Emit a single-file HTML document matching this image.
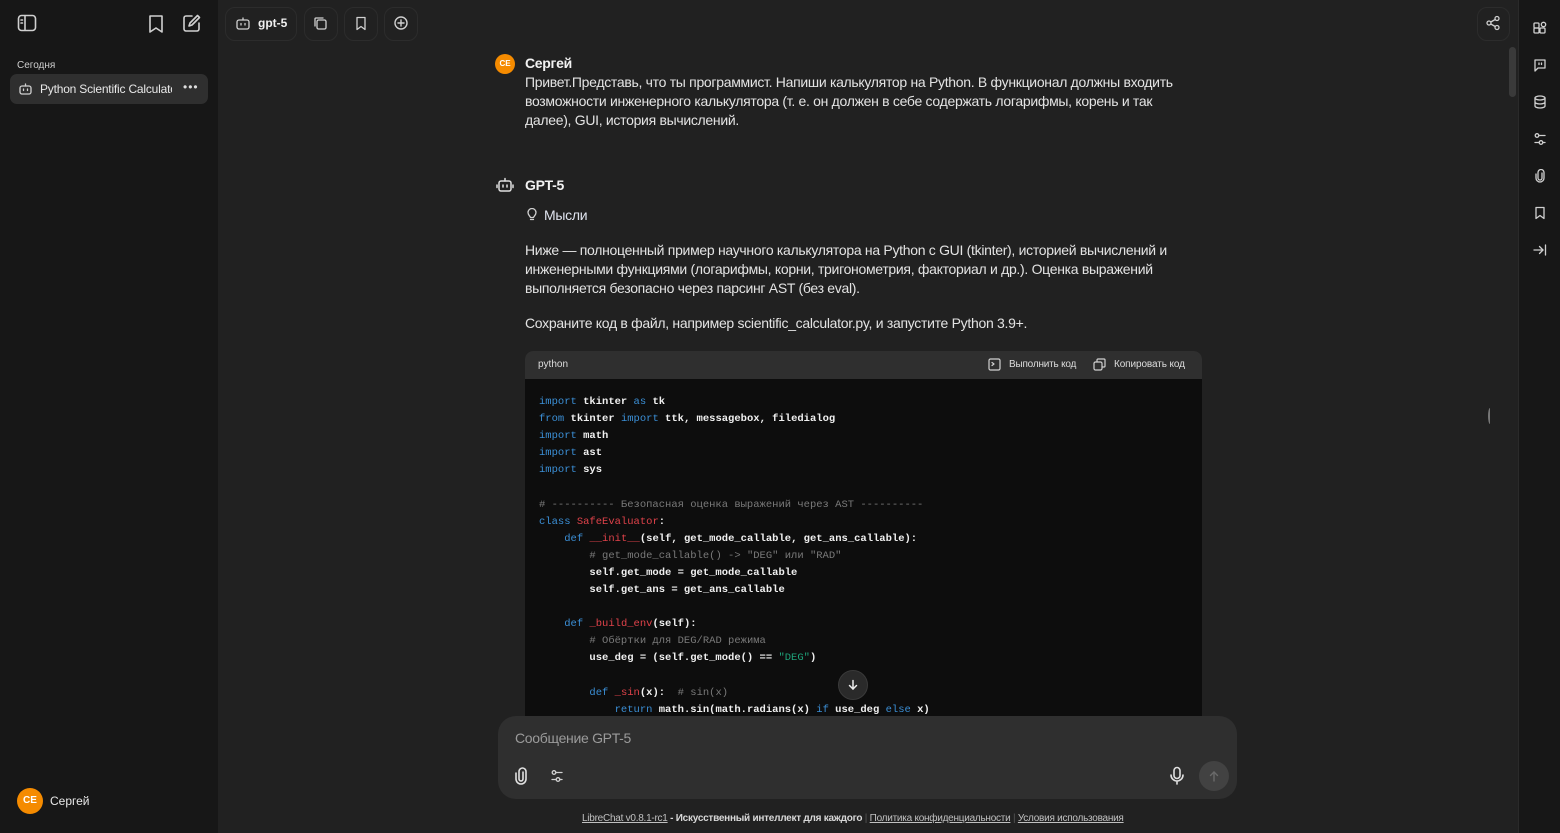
<!DOCTYPE html>
<html><head><meta charset="utf-8"><style>
*{box-sizing:border-box;margin:0;padding:0}
body{width:1560px;height:833px;overflow:hidden;background:#212121;font-family:"Liberation Sans","Noto Sans CJK SC",sans-serif;color:#ececec;position:relative}
.abs{position:absolute}
.side{left:0;top:0;width:218px;height:833px;background:#171717}
.rp{left:1518px;top:0;width:42px;height:833px;background:#171717;border-left:1px solid #2a2a2a}
.btn{position:absolute;border:1px solid #2c2c2c;border-radius:10px;height:34px;top:7px}
.t{position:absolute;font-size:14px;line-height:19px;color:#e3e3e3;white-space:nowrap;letter-spacing:-0.3px}
.code{position:absolute;left:539px;top:394px;font-family:"Liberation Mono",monospace;font-size:10.5px;line-height:17.1px;color:#f0f0f0;font-weight:bold;white-space:pre}
.k{color:#3b8fd6;font-weight:normal}.c{color:#7a7a7a;font-weight:normal}.r{color:#e0424a;font-weight:normal}.g{color:#1fa37a;font-weight:normal}
svg{position:absolute;fill:none;stroke:#d0d0d0;stroke-width:1.6;stroke-linecap:round;stroke-linejoin:round}
.f{position:absolute;top:813px;font-size:10px;color:#d8d8d8;white-space:nowrap;letter-spacing:-0.25px;font-weight:bold}
.f u{color:#c0c0c0;font-weight:normal}
</style></head><body>
<div class="abs side"></div>
<svg style="left:17px;top:14px" width="20" height="18" viewBox="0 0 20 18"><rect x="1.5" y="1.5" width="17" height="15" rx="3"/><line x1="8" y1="2" x2="8" y2="16"/><line x1="4" y1="6" x2="5.5" y2="6"/><line x1="4" y1="9" x2="5.5" y2="9"/></svg>
<svg style="left:147px;top:14px" width="18" height="20" viewBox="0 0 18 20"><path d="M3 2h12v16l-6-4-6 4z"/></svg>
<svg style="left:182px;top:13px" width="20" height="20" viewBox="0 0 20 20"><path d="M10 3H4a2 2 0 0 0-2 2v11a2 2 0 0 0 2 2h11a2 2 0 0 0 2-2v-6"/><path d="M15.5 2.5l2 2L10 12l-3 1 1-3z"/></svg>
<div class="abs" style="left:17px;top:60px;font-size:10px;color:#cfcfcf">Сегодня</div>
<div class="abs" style="left:10px;top:74px;width:198px;height:30px;background:#2f2f2f;border-radius:7px"></div>
<svg style="left:19px;top:83px;stroke-width:1.3" width="13" height="12" viewBox="0 0 13 12"><rect x="1" y="3" width="11" height="8" rx="2"/><line x1="6.5" y1="1" x2="6.5" y2="3"/><line x1="4.5" y1="6" x2="4.5" y2="7.5"/><line x1="8.5" y1="6" x2="8.5" y2="7.5"/></svg>
<div class="abs" style="left:40px;top:82px;width:132px;overflow:hidden;white-space:nowrap;font-size:12px;color:#e8e8e8;letter-spacing:-0.2px">Python Scientific Calculator</div>
<div class="abs" style="left:183px;top:80px;font-size:12px;color:#ddd;letter-spacing:1px">•••</div>
<div class="abs" style="left:17px;top:788px;width:26px;height:26px;border-radius:50%;background:#f58b00;color:#fff;font-size:10px;font-weight:bold;text-align:center;line-height:26px">CE</div>
<div class="abs" style="left:50px;top:794px;font-size:12px;color:#e8e8e8">Сергей</div>
<div class="btn" style="left:225px;width:72px"></div>
<svg style="left:236px;top:17px;stroke-width:1.3" width="14" height="13" viewBox="0 0 14 13"><rect x="1" y="3" width="12" height="9" rx="2"/><line x1="7" y1="1" x2="7" y2="3"/><line x1="5" y1="6.5" x2="5" y2="8"/><line x1="9" y1="6.5" x2="9" y2="8"/></svg>
<div class="abs" style="left:258px;top:16px;font-size:12px;font-weight:bold;color:#f0f0f0">gpt-5</div>
<div class="btn" style="left:304px;width:34px"></div>
<svg style="left:313px;top:16px;stroke-width:1.3" width="15" height="15" viewBox="0 0 15 15"><rect x="4" y="4" width="9" height="9" rx="1.5"/><path d="M10 2H3a1 1 0 0 0-1 1v7"/></svg>
<div class="btn" style="left:344px;width:34px"></div>
<svg style="left:355px;top:16px;stroke-width:1.3" width="12" height="15" viewBox="0 0 12 15"><path d="M2 1.5h8v12l-4-3-4 3z"/></svg>
<div class="btn" style="left:384px;width:34px"></div>
<svg style="left:393px;top:15px;stroke-width:1.4" width="16" height="16" viewBox="0 0 16 16"><circle cx="8" cy="8" r="6"/><line x1="8" y1="5" x2="8" y2="11"/><line x1="5" y1="8" x2="11" y2="8"/></svg>
<div class="btn" style="left:1477px;width:33px"></div>
<svg style="left:1485px;top:15px;stroke-width:1.3" width="16" height="16" viewBox="0 0 16 16"><circle cx="12" cy="3.5" r="2"/><circle cx="4" cy="8" r="2"/><circle cx="12" cy="12.5" r="2"/><line x1="5.8" y1="7" x2="10.2" y2="4.5"/><line x1="5.8" y1="9" x2="10.2" y2="11.5"/></svg>
<div class="abs" style="left:1509px;top:47px;width:7px;height:50px;border-radius:4px;background:#3a3a3a"></div>
<div class="abs rp"></div>
<svg style="left:1533px;top:21px;stroke-width:1.3" width="14" height="14" viewBox="0 0 14 14"><rect x="1" y="7" width="5" height="5" rx="1"/><rect x="7" y="7" width="5" height="5" rx="1"/><rect x="1" y="2" width="5" height="5" rx="1"/><circle cx="10.5" cy="3.5" r="2.2"/></svg>
<svg style="left:1533px;top:58px;stroke-width:1.3" width="14" height="14" viewBox="0 0 14 14"><path d="M2 2h10v8H5l-3 3z"/><line x1="6" y1="5" x2="6" y2="6.5"/><line x1="8.5" y1="5" x2="8.5" y2="6.5"/></svg>
<svg style="left:1533px;top:95px;stroke-width:1.3" width="14" height="14" viewBox="0 0 14 14"><ellipse cx="7" cy="3" rx="5" ry="2"/><path d="M2 3v8c0 1 2 2 5 2s5-1 5-2V3M2 7c0 1 2 2 5 2s5-1 5-2"/></svg>
<svg style="left:1533px;top:132px;stroke-width:1.3" width="14" height="14" viewBox="0 0 14 14"><circle cx="4" cy="3.5" r="1.8"/><circle cx="8" cy="10.5" r="1.8"/><line x1="6" y1="3.5" x2="12" y2="3.5"/><line x1="2" y1="10.5" x2="6" y2="10.5"/><line x1="10" y1="10.5" x2="12" y2="10.5"/></svg>
<svg style="left:1533px;top:169px;stroke-width:1.3" width="14" height="14" viewBox="0 0 14 14"><path d="M9 4v5a2 2 0 0 1-4 0V3.5a3 3 0 0 1 6 0V9a4 4 0 0 1-8 0V5"/></svg>
<svg style="left:1533px;top:206px;stroke-width:1.3" width="14" height="14" viewBox="0 0 14 14"><path d="M3 1.5h8v11l-4-3-4 3z"/></svg>
<svg style="left:1533px;top:243px;stroke-width:1.3" width="14" height="14" viewBox="0 0 14 14"><line x1="1" y1="7" x2="10" y2="7"/><path d="M6.5 3.5L10 7l-3.5 3.5"/><line x1="12.5" y1="2" x2="12.5" y2="12"/></svg>
<div class="abs" style="left:1488px;top:408px;width:4px;height:16px;border-left:2px solid #777;border-radius:50% 0 0 50%"></div>
<div class="abs" style="left:495px;top:54px;width:20px;height:20px;border-radius:50%;background:#f58b00;color:#fff;font-size:8px;font-weight:bold;text-align:center;line-height:20px">CE</div>
<div class="t" style="left:525px;top:54px;font-weight:bold;color:#f2f2f2">Сергей</div>
<div class="t" style="left:525px;top:73px">Привет.Представь, что ты программист. Напиши калькулятор на Python. В функционал должны входить</div>
<div class="t" style="left:525px;top:92px">возможности инженерного калькулятора (т. е. он должен в себе содержать логарифмы, корень и так</div>
<div class="t" style="left:525px;top:111px">далее), GUI, история вычислений.</div>
<svg style="left:496px;top:177px;stroke:#e0e0e0;stroke-width:1.5" width="18" height="16" viewBox="0 0 18 16"><rect x="3" y="4" width="12" height="10" rx="2"/><line x1="9" y1="1.5" x2="9" y2="4"/><line x1="1" y1="8" x2="1" y2="10.5"/><line x1="17" y1="8" x2="17" y2="10.5"/><line x1="7" y1="8" x2="7" y2="10"/><line x1="11" y1="8" x2="11" y2="10"/></svg>
<div class="t" style="left:525px;top:176px;font-weight:bold;color:#f2f2f2">GPT-5</div>
<svg style="left:527px;top:208px;stroke-width:1.3" width="10" height="14" viewBox="0 0 10 14"><path d="M3.5 9.5C3 8 1 7 1 4.5a4 4 0 0 1 8 0C9 7 7 8 6.5 9.5zM3.5 11.5h3"/></svg>
<div class="t" style="left:544px;top:206px;color:#dfe3ee">Мысли</div>
<div class="t" style="left:525px;top:241px">Ниже — полноценный пример научного калькулятора на Python с GUI (tkinter), историей вычислений и</div>
<div class="t" style="left:525px;top:260px">инженерными функциями (логарифмы, корни, тригонометрия, факториал и др.). Оценка выражений</div>
<div class="t" style="left:525px;top:279px">выполняется безопасно через парсинг AST (без eval).</div>
<div class="t" style="left:525px;top:314px">Сохраните код в файл, например scientific_calculator.py, и запустите Python 3.9+.</div>
<div class="abs" style="left:525px;top:351px;width:677px;height:380px;background:#0d0d0d;border-radius:8px;overflow:hidden">
<div style="height:28px;background:#2f2f2f"></div></div>
<div class="abs" style="left:538px;top:359px;font-size:10px;color:#ddd">python</div>
<svg style="left:988px;top:358px;stroke-width:1.2" width="13" height="13" viewBox="0 0 13 13"><rect x="1" y="1" width="11" height="11" rx="1.5"/><path d="M4 4.5l2 1.5-2 1.5"/></svg>
<div class="abs" style="left:1009px;top:359px;font-size:10px;color:#ddd;letter-spacing:-0.2px">Выполнить код</div>
<svg style="left:1093px;top:358px;stroke-width:1.2" width="13" height="13" viewBox="0 0 13 13"><rect x="1" y="4" width="8" height="8" rx="1.5"/><path d="M4 4V2a1 1 0 0 1 1-1h6a1 1 0 0 1 1 1v6a1 1 0 0 1-1 1H9"/></svg>
<div class="abs" style="left:1114px;top:359px;font-size:10px;color:#ddd;letter-spacing:-0.1px">Копировать код</div>
<div class="code"><span class="k">import</span> tkinter <span class="k">as</span> tk
<span class="k">from</span> tkinter <span class="k">import</span> ttk, messagebox, filedialog
<span class="k">import</span> math
<span class="k">import</span> ast
<span class="k">import</span> sys

<span class="c"># ---------- Безопасная оценка выражений через AST ----------</span>
<span class="k">class</span> <span class="r">SafeEvaluator</span>:
    <span class="k">def</span> <span class="r">__init__</span>(self, get_mode_callable, get_ans_callable):
        <span class="c"># get_mode_callable() -&gt; "DEG" или "RAD"</span>
        self.get_mode = get_mode_callable
        self.get_ans = get_ans_callable

    <span class="k">def</span> <span class="r">_build_env</span>(self):
        <span class="c"># Обёртки для DEG/RAD режима</span>
        use_deg = (self.get_mode() == <span class="g">"DEG"</span>)

        <span class="k">def</span> <span class="r">_sin</span>(x):  <span class="c"># sin(x)</span>
            <span class="k">return</span> math.sin(math.radians(x) <span class="k">if</span> use_deg <span class="k">else</span> x)</div>
<div class="abs" style="left:838px;top:670px;width:30px;height:30px;border-radius:50%;background:#2a2a2a;border:1px solid #3a3a3a"></div>
<svg style="left:847px;top:679px;stroke:#eee;stroke-width:1.5" width="12" height="12" viewBox="0 0 12 12"><line x1="6" y1="1.5" x2="6" y2="10"/><path d="M2.5 6.5L6 10l3.5-3.5"/></svg>
<div class="abs" style="left:218px;top:716px;width:1300px;height:117px;background:#212121"></div>
<div class="abs" style="left:498px;top:716px;width:739px;height:83px;background:#2f2f2f;border-radius:18px"></div>
<div class="abs" style="left:515px;top:730px;font-size:14px;color:#9b9b9b;letter-spacing:-0.3px">Сообщение GPT-5</div>
<svg style="left:513px;top:767px;stroke:#e0e0e0;stroke-width:1.6" width="16" height="18" viewBox="0 0 16 18"><path d="M10 5v7a2 2 0 0 1-4 0V4.5a3.5 3.5 0 0 1 7 0V12a5 5 0 0 1-10 0V6"/></svg>
<svg style="left:550px;top:769px;stroke-width:1.3" width="14" height="14" viewBox="0 0 14 14"><circle cx="4" cy="3.5" r="1.8"/><circle cx="8" cy="10.5" r="1.8"/><line x1="6" y1="3.5" x2="12" y2="3.5"/><line x1="2" y1="10.5" x2="6" y2="10.5"/><line x1="10" y1="10.5" x2="12" y2="10.5"/></svg>
<svg style="left:1169px;top:766px;stroke:#e0e0e0;stroke-width:1.6" width="16" height="20" viewBox="0 0 16 20"><rect x="5" y="1.5" width="6" height="11" rx="3"/><path d="M2 9a6 6 0 0 0 12 0M8 15v3"/></svg>
<div class="abs" style="left:1199px;top:761px;width:30px;height:30px;border-radius:50%;background:#424242"></div>
<svg style="left:1208px;top:770px;stroke:#6a6a6a;stroke-width:1.4" width="12" height="12" viewBox="0 0 12 12"><line x1="6" y1="11" x2="6" y2="2"/><path d="M2.5 5.5L6 2l3.5 3.5"/></svg>
<div class="f" style="left:582px"><u>LibreChat v0.8.1-rc1</u> - Искусственный интеллект для каждого <span style="color:#555;font-weight:normal">|</span> <u>Политика конфиденциальности</u> <span style="color:#555;font-weight:normal">|</span> <u>Условия использования</u></div>
</body></html>
